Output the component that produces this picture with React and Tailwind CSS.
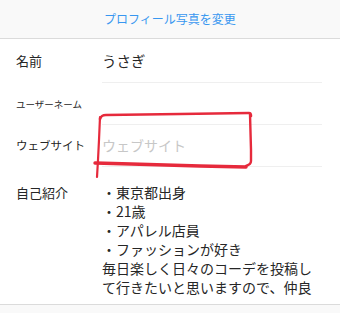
import React from 'react';

const font = { fontFamily: '"Noto Sans CJK JP", "Noto Sans", sans-serif' };

const bio = ['・東京都出身', '・21歳', '・アパレル店員', '・ファッションが好き', '毎日楽しく日々のコーデを投稿して行きたいと思いますので、仲良'];

const Row = ({ label, labelClass, children, placeholder }) => (
  <div className="flex h-[42px] items-center">
    <div className={`w-[102px] shrink-0 pl-4 text-[#262626] ${labelClass}`}>{label}</div>
    <div className="mr-[18px] flex h-full flex-1 items-center border-b border-[#efefef]">
      {children ? (
        <span className="text-[14px] text-[#262626]">{children}</span>
      ) : (
        <span className="text-[14px] text-[#c7c7c7]">{placeholder}</span>
      )}
    </div>
  </div>
);

export default function App() {
  return (
    <div className="relative h-[313px] w-[340px] overflow-hidden bg-white" style={font}>
      {/* header band */}
      <div className="flex h-[39px] items-center justify-center border-b border-[#dbdbdb] bg-[#f9f9f9]">
        <span className="text-[12px] text-[#3897f0]">プロフィール写真を変更</span>
      </div>

      {/* form rows */}
      <div className="flex h-[44px] items-center">
        <div className="w-[102px] shrink-0 pl-4 text-[13px] text-[#262626]">名前</div>
        <div className="mr-[18px] flex h-full flex-1 items-center border-b border-[#efefef]">
          <span className="text-[14.5px] text-[#262626]">うさぎ</span>
        </div>
      </div>
      <Row label="ユーザーネーム" labelClass="text-[9.5px]" placeholder="" />
      <Row label="ウェブサイト" labelClass="text-[11.5px]" placeholder="ウェブサイト" />

      {/* bio */}
      <div className="flex h-[138px] border-b border-[#dbdbdb] pt-[16px]">
        <div className="w-[102px] shrink-0 pl-4 text-[13px] leading-[19px] text-[#262626]">自己紹介</div>
        <div className="w-[220px] text-[14px] leading-[19px] text-[#262626]">
          {bio.map((line, i) => (
            <div key={i}>{line}</div>
          ))}
        </div>
      </div>
      <div className="h-[8px] bg-[#f9f9f9]" />

      {/* red hand-drawn highlight */}
      <svg className="pointer-events-none absolute left-0 top-0" width="340" height="313" viewBox="0 0 340 313">
        <g fill="none" stroke="#e62a3c" strokeLinecap="round" strokeLinejoin="round">
          <path d="M100 119 C101 116 102 115 106 115 L180 114 L249 113 C251 113 251 114 251 116" strokeWidth="2.6" />
          <path d="M250 114 L251 150 L251 161 C251 164 249 165 246 166" strokeWidth="2.4" />
          <path d="M95 163 C130 164 170 165 200 166 L246 167" strokeWidth="3.4" />
          <path d="M100 117 L99 140 L98 160 L97 177" strokeWidth="2.2" />
        </g>
      </svg>
    </div>
  );
}
